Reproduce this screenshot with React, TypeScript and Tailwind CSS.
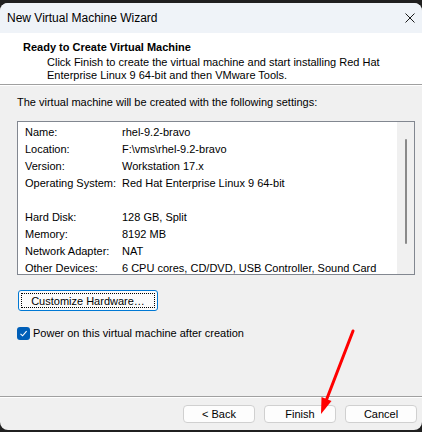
import React from "react";

const rows: [string, string][] = [
  ["Name:", "rhel-9.2-bravo"],
  ["Location:", "F:\\vms\\rhel-9.2-bravo"],
  ["Version:", "Workstation 17.x"],
  ["Operating System:", "Red Hat Enterprise Linux 9 64-bit"],
  ["", ""],
  ["Hard Disk:", "128 GB, Split"],
  ["Memory:", "8192 MB"],
  ["Network Adapter:", "NAT"],
  ["Other Devices:", "6 CPU cores, CD/DVD, USB Controller, Sound Card"],
];

export default function App() {
  return (
    <div
      className="relative w-[422px] h-[432px] bg-[#202020] pt-[3px] overflow-hidden text-black"
      style={{ fontFamily: '"Liberation Sans", Arial, sans-serif' }}
    >
      <div className="h-[427px] rounded-[8px] overflow-hidden flex flex-col bg-[#f0f0f0]">
        {/* Title bar */}
        <div className="h-[30px] bg-[#eff3f8] flex items-center justify-between pl-[7px] pr-[7px]">
          <span className="text-[12px] leading-[14px]">New Virtual Machine Wizard</span>
          <svg width="10" height="10" viewBox="0 0 10 10" className="mr-[0px]">
            <path d="M0.5 0.5 L9.5 9.5 M9.5 0.5 L0.5 9.5" stroke="#1a1a1a" strokeWidth="1" />
          </svg>
        </div>
        {/* Header */}
        <div className="h-[51px] bg-white pl-[23px] pt-[7px]">
          <div className="text-[11px] leading-[14px] font-bold">Ready to Create Virtual Machine</div>
          <div className="pl-[24px] mt-[2px] text-[11px] leading-[13px]">
            <div>Click Finish to create the virtual machine and start installing Red Hat</div>
            <div>Enterprise Linux 9 64-bit and then VMware Tools.</div>
          </div>
        </div>
        <div className="h-px bg-[#a0a0a0]" />
        <div className="h-px bg-white" />
        {/* Body */}
        <div className="flex-1 px-[17px] pt-[9px] text-[11px] leading-[14px] flex flex-col">
          <div>The virtual machine will be created with the following settings:</div>
          <div className="mt-[12px] w-[398px] h-[154px] border border-[#828790] bg-white flex">
            <div className="flex-1 pl-[7px] pt-[1px] overflow-hidden">
              {rows.map(([k, v], i) => (
                <div key={i} className="flex h-[17px] items-center whitespace-nowrap">
                  <span className="w-[97px] shrink-0">{k}</span>
                  <span>{v}</span>
                </div>
              ))}
            </div>
            <div className="w-[17px] bg-[#f0f0f0] flex justify-center pt-[17px]">
              <div className="w-[2px] h-[105px] bg-[#8a8a8a] rounded-full ml-[1px]" />
            </div>
          </div>
          <button className="mt-[15px] ml-[1px] w-[140px] h-[21px] rounded-[3px] border border-[#0078d4] bg-[#fbfbfb] p-[2px]">
            <div className="w-full h-full border border-dotted border-black flex items-center justify-center text-[11px]">
              Customize Hardware…
            </div>
          </button>
          <div className="mt-[15px] flex items-center">
            <div className="w-[13px] h-[13px] rounded-[3px] bg-[#005fb8] flex items-center justify-center">
              <svg width="9" height="9" viewBox="0 0 9 9">
                <path d="M1.5 4.8 L3.6 6.8 L7.6 2.2" stroke="white" strokeWidth="1.1" fill="none" />
              </svg>
            </div>
            <span className="ml-[3px]">Power on this virtual machine after creation</span>
          </div>
        </div>
        <div className="h-px bg-[#a0a0a0]" />
        <div className="h-px bg-white" />
        {/* Footer */}
        <div className="h-[32px] pt-[7px] pr-[5px] flex justify-end gap-[9px] text-[11px]">
          <button className="w-[72px] h-[18px] rounded-[4px] border border-[#d0d0d0] bg-[#fdfdfd] flex items-center justify-center">
            &lt; Back
          </button>
          <button className="w-[72px] h-[18px] rounded-[4px] border border-[#d0d0d0] bg-[#fdfdfd] flex items-center justify-center">
            Finish
          </button>
          <button className="w-[72px] h-[18px] rounded-[4px] border border-[#d0d0d0] bg-[#fdfdfd] flex items-center justify-center">
            Cancel
          </button>
        </div>
      </div>
      {/* Red arrow annotation */}
      <svg className="absolute left-0 top-0 pointer-events-none" width="422" height="432">
        <line x1="353" y1="331" x2="326" y2="401" stroke="#ff0000" strokeWidth="3" strokeLinecap="round" />
        <polygon points="321,414 331.5,401 321.5,397" fill="#ff0000" />
      </svg>
    </div>
  );
}
